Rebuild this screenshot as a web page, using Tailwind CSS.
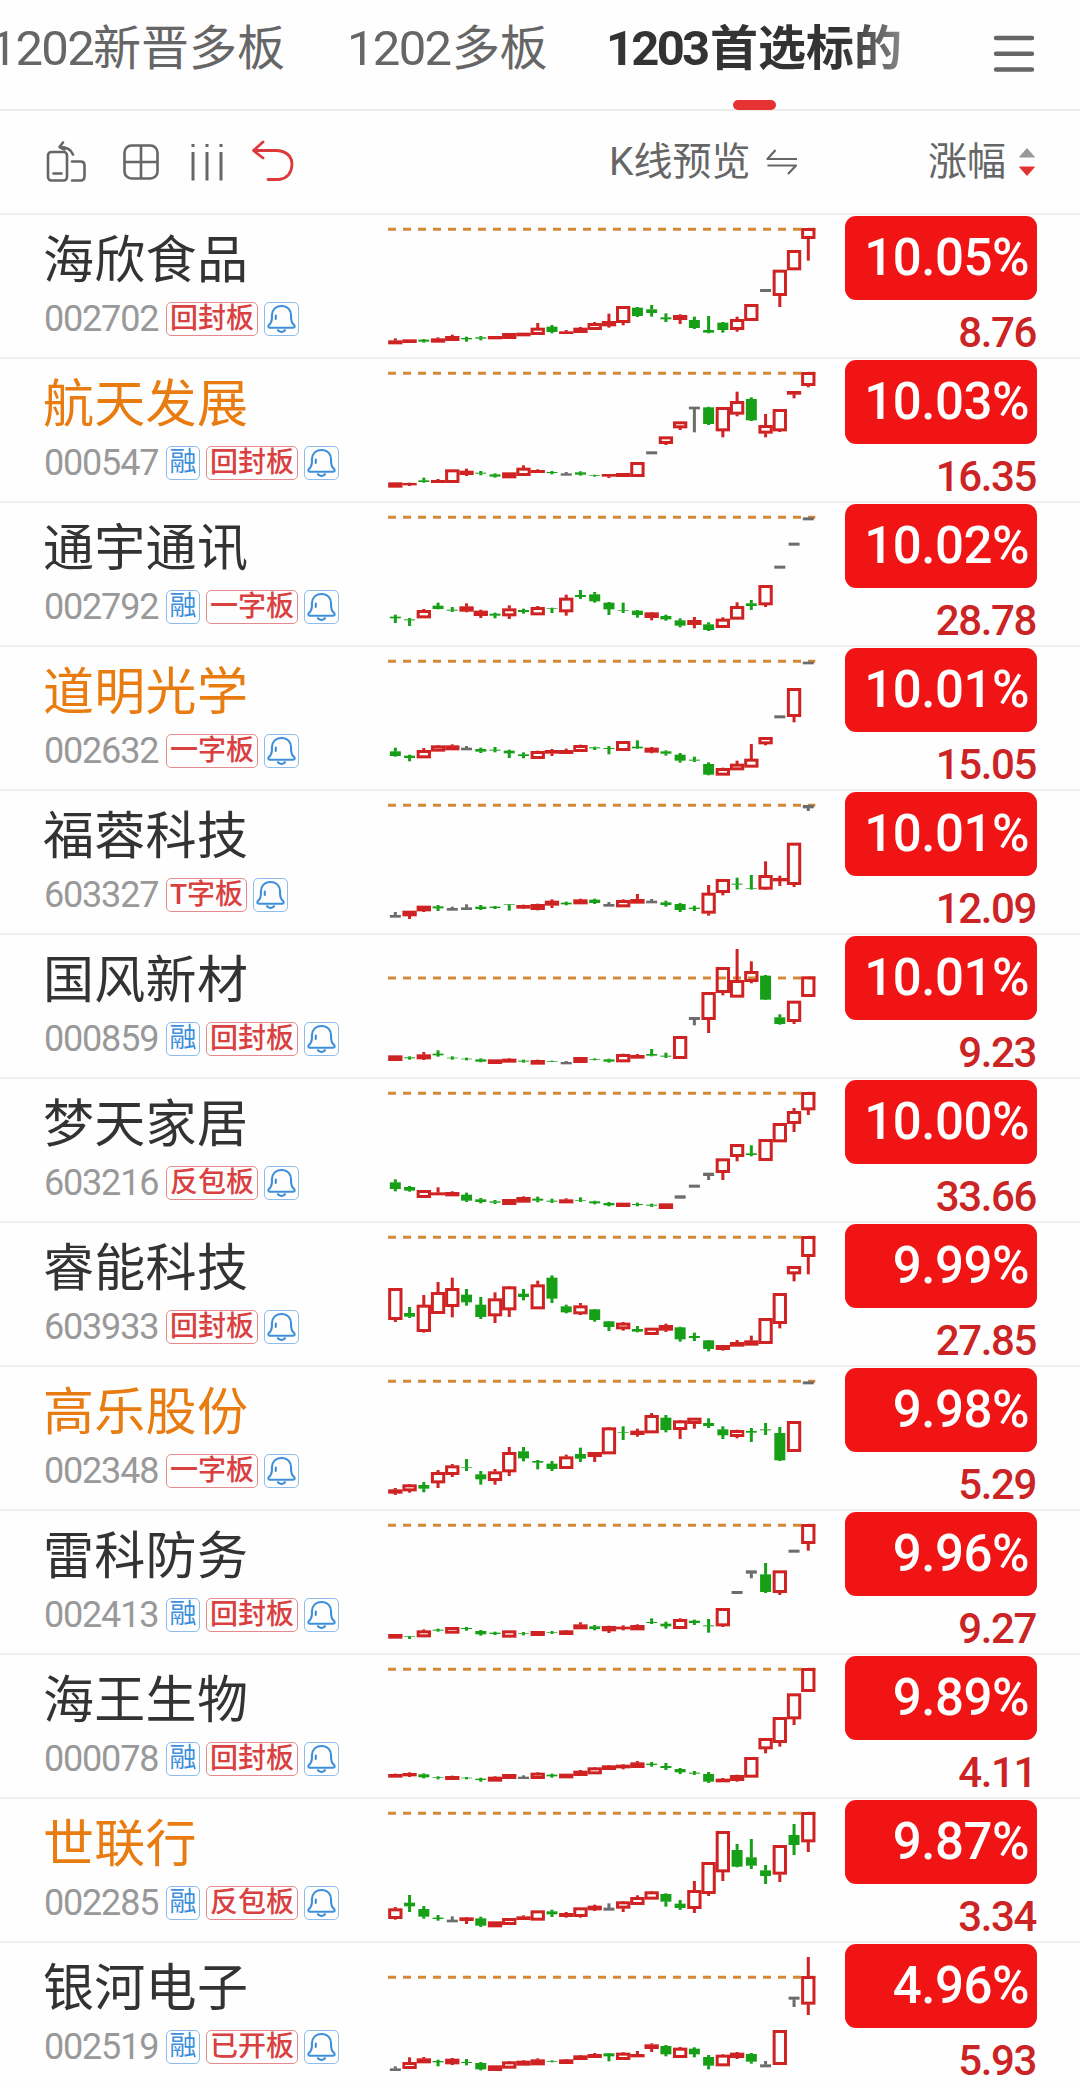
<!DOCTYPE html>
<html lang="zh-CN">

<head>
  <meta charset="UTF-8">
  <title>1203首选标的</title>
  <script src="https://cdn.jsdelivr.net/npm/@tailwindcss/browser@4"></script>
</head>

<body class="w-[1080px] h-[2087px] overflow-hidden bg-[#fefefe] text-[#333] font-['Roboto','Noto_Sans_CJK_SC',sans-serif]">

  <!-- 分组标签 -->
  <header class="flex h-[111px] border-b-2 border-[#ececec] text-[48px] leading-[98px] text-[#666] whitespace-nowrap">
    <div class="w-[347px] shrink-0 flex items-baseline">
      <span class="w-[93px] shrink-0 flex justify-end text-[49px] tracking-[-1.7px]">1202</span>
      <span>新晋多板</span>
    </div>
    <div class="w-[259px] shrink-0 flex items-baseline">
      <span class="w-[105px] shrink-0 text-[49px] tracking-[-1.7px]">1202</span>
      <span class="tracking-[-0.5px]">多板</span>
    </div>
    <div class="relative w-[387px] shrink-0 flex items-baseline font-bold text-[#333]">
      <span class="w-[104px] shrink-0 text-[49px] tracking-[-2.8px]">1203</span>
      <span class="bg-linear-to-r from-[#333] from-70% to-[#888] bg-clip-text text-transparent">首选标的</span>
      <span class="absolute left-[127px] top-[100px] w-[43px] h-[10px] rounded-full bg-[#e63232]"></span>
    </div>
    <svg class="w-[42px] h-[40px] mt-[34px]" viewBox="0 0 42 40" stroke="#666" stroke-width="4.4" stroke-linecap="round">
      <path d="M3 4h36M3 19.7h36M3 35.5h36" />
    </svg>
  </header>

  <!-- 工具栏 -->
  <div class="flex items-center h-[102px] pl-[46px] text-[39px] text-[#666] whitespace-nowrap">
    <svg class="w-[40px] h-[42px] -mt-[2px]" viewBox="0 0 40 42" fill="none" stroke="#666" stroke-width="2.6" stroke-linecap="round" stroke-linejoin="round">
      <rect x="2" y="12" width="19" height="28.500" rx="3.500" />
      <path d="M7.500 33.500h8M26 21.500h8.500q4 0 4 4V36q0 4.500-4 4.500H26" />
      <path d="M17 2.500l-3.500 4.500 5 2.500M14 7q10 0 13 7.500" />
    </svg>
    <svg class="w-[36px] h-[36px] ml-[37px]" viewBox="0 0 36 36" fill="none" stroke="#666" stroke-width="2.6">
      <rect x="1.500" y="1.500" width="33" height="33" rx="7" />
      <path d="M18 1.500v33M1.500 18h33" />
    </svg>
    <svg class="w-[34px] h-[38px] ml-[31px]" viewBox="0 0 34 38" stroke="#666" stroke-width="3">
      <path d="M3 1v3M3 9v28.500M17 1v3M17 9v28.500M31 1v3M31 9v28.500" />
    </svg>
    <svg class="w-[44px] h-[42px] ml-[26px] -mt-[2px]" viewBox="0 0 44 42" fill="none" stroke="#dc3a3a" stroke-width="2.800" stroke-linecap="round" stroke-linejoin="round">
      <path d="M13 2L3.500 10.500 13 18M4 10.500H27Q42 12 42 25Q41 38 29 39.500H18" />
    </svg>
    <span class="w-[157px] ml-[315px]">K线预览</span>
    <svg class="w-[32px] h-[28px]" viewBox="0 0 32 28" fill="none" stroke="#666" stroke-width="2.200" stroke-linejoin="round">
      <path d="M9.500 2L1.500 11h29.500M1.500 17.500H30L22 26" />
    </svg>
    <span class="w-[91px] ml-[130px]">涨幅</span>
    <svg class="w-[16px] h-[28px]" viewBox="0 0 16 28">
      <path d="M8 0l7.500 8.500v1H.5v-1z" fill="#999" />
      <path d="M8 28l7.500-8.500v-1H.5v1z" fill="#e03232" />
    </svg>
  </div>

  <main id="list"></main>

  <script>
    // 每根K线：类型 最高 实体上沿 实体下沿 最低（r 阳线，g 阴线，x 平盘）
    const rows = [
      { name: '海欣食品', code: '002702', tag: '回封板', pct: '10.05%', price: '8.76', base: 12, line: 46,
        k: 'r385 391 403 403;r388 388 399 399;g387 389 395 398;r382 385 398 398;r374 378 393 393;g380 384 388 395;g378 382 386 391;r378 378 388 388;r369 369 387 387;r368 368 379 379;r339 353 375 375;g345 350 366 370;r360 364 372 372;r351 353 369 369;r336 339 360 360;r311 333 349 353;r288 288 339 346;g291 293 318 321;g285 298 309 320;g310 322 328 336;r313 315 330 342;g320 330 354 357;g318 360 368 370;g336 338 360 368;r320 327 360 365;r282 282 333 333;x237 237 246 246;r179 179 258 291;r120 120 181 181;r54 54 87 152' },
      { name: '航天发展', hot: true, rong: true, code: '000547', tag: '回封板', pct: '10.03%', price: '16.35', base: 444, line: 46,
        k: 'r817 817 833 833;r818 819 826 828;g803 811 816 818;r807 810 819 819;r778 778 819 819;r776 782 795 798;g783 788 791 796;g790 793 800 803;r787 787 805 805;r766 773 798 798;r778 780 789 789;g783 786 789 793;x786 790 797 797;g784 787 794 797;g794 796 798 800;r792 792 800 804;r789 789 801 801;r756 756 801 801;x724 724 733 733;r679 679 702 705;r634 634 655 660;x590 590 598 667;g590 592 642 645;r591 591 664 682;r545 573 614 619;g562 567 631 633;r612 645 671 682;r597 597 664 666;r543 543 554 565;r486 486 528 532' },
      { name: '通宇通讯', rong: true, code: '002792', tag: '一字板', pct: '10.02%', price: '28.78', base: 6, line: 46,
        k: 'g344 350 355 369;g354 358 361 378;r327 330 355 355;g308 317 327 328;g321 329 332 336;r310 319 335 337;r329 332 348 354;g338 341 347 355;r316 325 349 357;g326 330 336 341;r318 321 346 346;g323 324 326 339;r284 293 337 347;g270 285 291 297;g276 283 304 308;g306 308 328 345;g308 330 332 339;g330 332 345 353;r336 337 354 361;g344 348 358 362;g355 361 377 382;r351 360 375 385;g367 373 390 393;r352 356 384 384;r307 318 359 359;g300 310 318 330;r255 255 316 321;x197 197 206 206;x128 128 137 137;x52 52 61 61' },
      { name: '道明光学', hot: true, code: '002632', tag: '一字板', pct: '10.01%', price: '15.05', base: 438, line: 46,
        k: 'g743 754 768 770;g764 767 774 784;r744 750 775 775;r735 736 755 755;r733 736 751 751;x738 743 751 751;g743 747 755 759;g741 749 752 757;g749 752 760 774;g757 763 768 775;r752 753 777 777;r747 750 761 768;r746 750 762 762;r734 735 756 756;g740 742 745 750;g738 744 747 763;r723 723 753 753;g721 740 745 746;r741 743 758 760;g751 754 761 767;g759 764 782 788;g770 779 782 786;g787 792 824 826;r803 804 827 827;r782 791 811 811;r732 776 803 803;r711 711 733 736;x646 646 655 655;r564 564 651 667;x485 485 493 493' },
      { name: '福蓉科技', code: '603327', tag: 'T字板', pct: '10.01%', price: '12.09', base: 0, line: 46,
        k: 'x366 375 383 383;r362 362 379 387;r347 347 364 366;g345 349 355 363;x350 354 362 362;x343 352 360 360;g345 350 357 360;g348 350 354 357;g343 343 345 362;r344 345 356 357;r341 342 360 361;r328 332 347 354;g335 338 343 346;r326 328 343 343;g326 329 339 342;x336 342 350 350;r328 330 352 352;r312 327 341 341;x327 332 340 340;g332 337 345 350;g339 342 360 366;g347 353 357 363;r285 308 371 377;r267 267 309 316;g263 281 284 299;g255 294 296 299;r214 255 299 300;r257 264 274 288;r158 158 285 291;x45 45 55 63' },
      { name: '国风新材', rong: true, code: '000859', tag: '回封板', pct: '10.01%', price: '9.23', base: 432, line: 132,
        k: 'r796 796 813 813;g799 802 805 809;r786 793 808 810;g781 791 796 800;g799 803 805 809;g803 806 808 811;g805 808 815 817;r808 808 822 822;r805 806 818 818;g809 812 815 818;r809 810 824 824;g812 813 815 816;x813 816 823 823;r801 801 819 819;g805 807 809 811;g806 808 815 818;r791 792 817 817;r792 795 806 806;g777 792 797 799;g788 797 800 804;r738 738 807 807;x681 681 690 706;r606 606 690 729;r531 531 609 616;r477 570 623 623;r514 543 576 580;g555 557 629 630;g673 682 702 704;r632 632 696 702;r559 559 621 621' },
      { name: '梦天家居', code: '603216', tag: '反包板', pct: '10.00%', price: '33.66', base: 6, line: 46,
        k: 'g310 319 339 346;g330 333 344 347;r342 342 366 366;r334 349 358 358;r346 348 361 361;g350 356 374 378;g366 370 378 382;g372 376 380 384;r369 369 387 387;r361 363 380 380;g362 368 374 379;g368 374 377 381;r367 370 382 382;g364 372 374 378;g374 376 382 385;g378 381 388 391;r380 380 393 393;g380 384 387 391;g383 386 389 393;r382 382 399 399;x358 358 368 368;x326 326 335 335;x290 290 300 312;r247 247 291 312;r204 204 243 256;g208 232 237 241;r189 189 255 255;r141 141 199 199;r96 105 144 168;r48 48 103 117' },
      { name: '睿能科技', code: '603933', tag: '回封板', pct: '9.99%', price: '27.85', base: 438, line: 46,
        k: 'r636 636 732 738;g693 711 722 726;r657 686 768 770;r618 648 714 714;r605 636 693 724;g639 656 679 689;g663 686 723 729;r649 667 721 741;r630 631 703 723;g639 653 663 673;r614 625 700 700;g598 605 668 681;g686 691 709 712;r681 688 715 717;g699 700 732 737;g735 736 753 765;r738 740 760 764;g750 759 767 769;r755 755 777 777;r743 747 764 768;g752 754 790 797;g770 780 786 795;g792 793 819 826;r807 807 822 824;r792 798 812 812;r779 793 809 809;r726 726 804 804;r651 651 744 757;r570 570 595 616;r480 480 543 595' },
      { name: '高乐股份', hot: true, code: '002348', tag: '一字板', pct: '9.98%', price: '5.29', base: 6, line: 46,
        k: 'r372 376 389 393;r360 361 382 386;g354 363 374 385;r318 324 358 372;r300 304 333 339;g285 310 312 321;g321 331 346 362;r315 322 351 362;r249 264 325 336;g249 262 283 292;g288 291 296 316;g291 299 315 321;r272 277 315 315;g251 270 284 294;r264 264 279 294;r189 190 271 271;g187 204 206 228;r194 200 213 218;r147 153 208 208;g153 161 198 205;r168 169 198 225;r161 161 180 194;g163 177 186 192;g187 196 214 225;r197 198 219 223;g192 201 206 234;g177 196 199 213;g189 207 289 291;r171 171 264 264;x52 52 61 61' },
      { name: '雷科防务', rong: true, code: '002413', tag: '回封板', pct: '9.96%', price: '9.27', base: 438, line: 46,
        k: 'r810 810 824 824;g816 817 819 825;r796 799 820 820;g794 797 800 803;r789 789 809 809;g789 792 795 800;g798 801 811 815;g803 806 810 813;r799 799 821 821;g804 807 809 814;r801 801 816 816;g801 804 806 810;r798 799 813 813;r775 781 796 796;g783 787 795 799;r785 786 802 807;r784 788 796 799;r781 783 799 799;g763 774 777 780;g773 779 787 794;r763 765 795 795;g767 770 777 783;g765 784 787 806;r732 732 787 789;x681 681 690 690;x619 619 629 643;g597 631 684 687;r619 619 687 693;x557 557 566 566;r480 480 540 560' },
      { name: '海王生物', rong: true, code: '000078', tag: '回封板', pct: '9.89%', price: '4.11', base: 6, line: 46,
        k: 'r365 366 377 377;r361 363 373 375;g364 367 376 379;g373 376 378 382;r371 372 384 384;g375 377 379 382;g377 380 384 389;r373 374 389 389;r366 366 381 381;x370 374 381 381;r361 362 381 381;g365 368 373 377;r365 365 379 379;r354 356 372 372;r345 346 367 367;r339 340 354 354;r337 338 349 352;r327 331 348 348;g330 335 339 344;g333 342 348 354;g348 351 361 366;g357 362 365 369;g360 366 389 393;r378 380 391 391;r368 369 387 389;r315 315 377 377;r258 258 292 304;r195 195 273 284;r124 124 202 219;r48 48 120 120' },
      { name: '世联行', hot: true, rong: true, code: '002285', tag: '反包板', pct: '9.87%', price: '3.34', base: 438, line: 46,
        k: 'r765 769 801 803;g729 752 763 780;g762 771 794 800;g789 797 801 806;x793 803 811 811;r795 796 807 816;g794 799 821 825;r808 808 826 826;r798 798 819 819;r790 793 804 804;r775 775 806 806;g773 778 787 795;r780 783 795 797;r766 766 795 797;r758 761 775 777;x754 767 776 776;r747 748 770 780;r730 735 759 759;r717 718 743 743;g724 726 749 764;g744 755 768 774;r687 714 771 783;r630 630 726 732;r537 537 661 687;g576 594 644 646;g561 616 641 651;g639 655 672 696;r579 579 668 690;g516 549 579 609;r480 480 571 600' },
      { name: '银河电子', rong: true, code: '002519', tag: '已开板', pct: '4.96%', price: '5.93', base: 870, line: 106,
        k: 'x1243 1249 1257 1257;r1216 1230 1251 1251;r1215 1219 1234 1234;g1223 1227 1231 1243;r1218 1220 1237 1239;g1221 1230 1233 1240;g1230 1233 1252 1255;r1240 1240 1257 1257;r1227 1228 1250 1250;r1225 1226 1241 1241;r1219 1222 1240 1240;g1225 1227 1229 1231;r1221 1222 1236 1236;r1209 1210 1224 1224;r1203 1206 1218 1218;g1203 1204 1213 1228;r1201 1202 1224 1224;r1197 1206 1216 1216;r1174 1177 1191 1200;g1179 1182 1207 1213;r1185 1187 1218 1218;g1186 1190 1207 1216;g1209 1215 1241 1252;r1207 1208 1243 1243;r1200 1202 1218 1221;g1203 1206 1229 1235;x1227 1237 1246 1246;r1134 1134 1239 1239;x1034 1034 1043 1065;r915 972 1058 1089' },
    ];

    const colors = { r: '#cf2222', g: '#17a017', x: '#6c6c6c' };

    const candle = (s, i) => {
      const type = s[0];
      const [high, top, bottom, low] = s.slice(1).split(' ').map(Number);
      const x = 46 + i * 42.72;
      const c = colors[type];
      let out = '';
      if (high < top) out += `<rect x="${x - 4.5}" y="${high}" width="9" height="${top - high + 1}" fill="${c}"/>`;
      if (low > bottom) out += `<rect x="${x - 4.5}" y="${bottom - 1}" width="9" height="${low - bottom + 1}" fill="${c}"/>`;
      if (type === 'r' && bottom - top > 18) {
        out += `<rect x="${x - 17}" y="${top + 4.5}" width="34" height="${bottom - top - 9}" fill="none" stroke="${c}" stroke-width="9"/>`;
      } else {
        const w = type === 'r' ? 43 : 33;
        out += `<rect x="${x - w / 2}" y="${top}" width="${w}" height="${bottom - top}" fill="${c}"/>`;
      }
      return out;
    };

    const bell = `
      <svg class="w-[35px] h-[34px] shrink-0 rounded-[5px] border border-[#8fbdea]" viewBox="0 0 33 32" fill="none" stroke="#3d8fdc" stroke-width="2.1" stroke-linecap="round" stroke-linejoin="round">
        <path d="M16.500 3C10.500 3 7 7 7 12c0 6-.6 7.500-3.200 10.200-1 1.200-.4 2.500 1 2.500h23.400c1.400 0 2-1.300 1-2.500C26.600 19.500 26 18 26 12c0-5-3.500-9-9.500-9zM13 27.200q3.500 3.600 7 0M10.800 12.500v3.500"/>
      </svg>`;

    document.getElementById('list').innerHTML = rows.map(r => `
      <div class="flex h-[144px] border-t-2 border-[#efefef] pl-[44px]">
        <div class="w-[336px] shrink-0 whitespace-nowrap">
          <div class="h-[85px] -ml-px leading-[91px] text-[51px] tracking-[0.3px] ${r.hot ? 'text-[#e87c10]' : 'text-[#333]'}">${r.name}</div>
          <div class="flex items-center gap-[6px] h-[38px]">
            <span class="w-[116px] text-[36px] leading-[38px] tracking-[-1.2px] text-[#999]">${r.code}</span>
            ${r.rong ? '<span class="w-[34px] h-[34px] rounded-[5px] border border-[#8fbdea] text-center text-[27px] leading-[31px] text-[#3d8fdc]">融</span>' : ''}
            <span class="h-[34px] px-[3px] rounded-[5px] border border-[#e58a8a] text-[28px] leading-[31px] font-medium text-[#d94040]">${r.tag}</span>
            ${bell}
          </div>
        </div>
        <svg class="w-[440px] h-[144px] shrink-0 -mt-px" viewBox="0 0 1320 432">
          <path d="M24 ${r.line}H1306" stroke="#d4893a" stroke-width="9" stroke-dasharray="24 21"/>
          <g transform="translate(0 ${-r.base})">${r.k.split(';').map(candle).join('')}</g>
        </svg>
        <div class="w-[192px] ml-[25px] shrink-0 text-right">
          <div class="h-[84px] mt-px rounded-[11px] bg-[#f01414] pr-[8px] text-[51px] font-medium leading-[83px] tracking-[-0.5px] text-white">${r.pct}</div>
          <div class="pr-[1px] text-[42px] font-medium leading-[66px] tracking-[-1.4px] text-[#cc2424]">${r.price}</div>
        </div>
      </div>`).join('');
  </script>
</body>

</html>
